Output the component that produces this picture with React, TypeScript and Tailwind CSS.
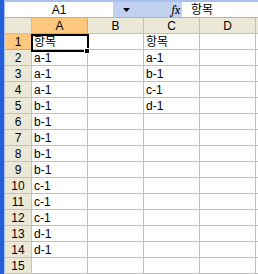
import React from "react";

const cols = [
  { name: "A", w: "w-[56px]" },
  { name: "B", w: "w-[56px]" },
  { name: "C", w: "w-[56px]" },
  { name: "D", w: "w-[56px]" },
];

const colA = ["항목", "a-1", "a-1", "a-1", "b-1", "b-1", "b-1", "b-1", "b-1", "c-1", "c-1", "c-1", "d-1", "d-1", ""];
const colC = ["항목", "a-1", "b-1", "c-1", "d-1"];

const font = { fontFamily: '"Liberation Sans", "Noto Sans CJK KR", sans-serif' };

function App() {
  return (
    <div
      className="relative w-[258px] h-[274px] overflow-hidden bg-white text-[12px] text-black flex"
      style={font}
    >
      {/* window edge */}
      <div className="w-[4px] h-full bg-[#245edb] shrink-0" />
      <div className="w-[1px] h-full bg-[#a9c1ee] shrink-0" />

      <div className="flex-1 flex flex-col min-w-0">
        <div className="h-[2px] bg-[#a9bfee]" />

        {/* formula bar */}
        <div className="h-[16px] flex items-stretch bg-[#c1d1f0]">
          <div className="w-[108px] bg-white flex items-center justify-center leading-none">A1</div>
          <div className="w-[27px] flex items-center justify-center">
            <svg width="7" height="4" viewBox="0 0 7 4">
              <path d="M0 0h7L3.5 4z" fill="#000" />
            </svg>
          </div>
          <div className="flex-1" />
          <div className="w-[12px] flex items-center justify-center font-serif italic text-[12px] leading-none">fx</div>
          <div className="w-[76px] bg-white flex items-center pl-[9px] leading-none">항목</div>
        </div>
        <div className="h-[1px] bg-[#9eb3dc]" />

        {/* column headers */}
        <div className="h-[16px] flex">
          <div className="w-[27px] shrink-0 bg-[#ebe8d7] border-r border-b border-[#c5c2b2]" />
          {cols.map((c, i) => (
            <div
              key={c.name}
              className={`${c.w} shrink-0 flex items-center justify-center leading-none border-r border-b ${
                i === 0 ? "bg-[#fbc87e] border-[#e0a94d]" : "bg-[#ebe8d7] border-[#c5c2b2]"
              }`}
            >
              {c.name}
            </div>
          ))}
          <div className="flex-1 bg-[#ebe8d7] border-b border-[#c5c2b2]" />
        </div>

        {/* rows */}
        {colA.map((a, r) => (
          <div key={r} className="h-[16px] flex shrink-0">
            <div
              className={`w-[27px] shrink-0 flex items-center justify-center leading-none border-r border-b ${
                r === 0 ? "bg-[#fbc87e] border-[#e0a94d]" : "bg-[#ebe8d7] border-[#c5c2b2]"
              }`}
            >
              {r + 1}
            </div>
            <div className="w-[56px] shrink-0 border-r border-b border-[#c0c0c0] pl-[2px] flex items-center leading-none">
              {a}
            </div>
            <div className="w-[56px] shrink-0 border-r border-b border-[#c0c0c0]" />
            <div className="w-[56px] shrink-0 border-r border-b border-[#c0c0c0] pl-[2px] flex items-center leading-none">
              {colC[r] ?? ""}
            </div>
            <div className="w-[56px] shrink-0 border-r border-b border-[#c0c0c0]" />
            <div className="flex-1 border-b border-[#c0c0c0]" />
          </div>
        ))}
      </div>

      {/* active cell A1 */}
      <div className="absolute left-[31px] top-[34px] w-[58px] h-[18px] border-2 border-black pointer-events-none" />
      <div className="absolute left-[84px] top-[48px] w-[6px] h-[6px] bg-black border border-white pointer-events-none" />
    </div>
  );
}

export default App;
